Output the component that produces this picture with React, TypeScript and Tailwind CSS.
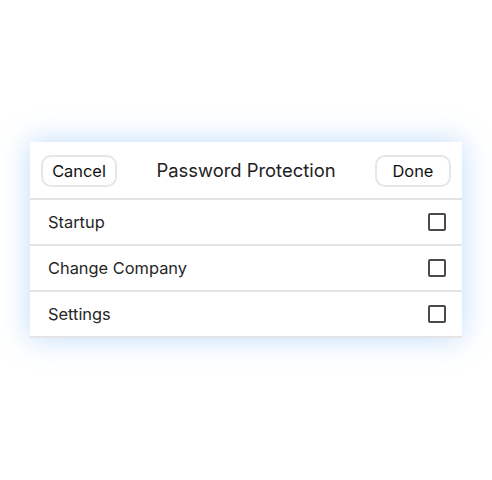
import React from "react";

function Row({ label }: { label: string }) {
  return (
    <div className="flex h-[46px] items-center justify-between border-b-2 border-[#e4e4e4] pl-[18px] pr-[16px]">
      <span className="text-[16.4px] text-[#262626]">{label}</span>
      <span className="h-[18px] w-[18px] rounded-[2px] border-2 border-[#4a4a4a] bg-white" />
    </div>
  );
}

export default function App() {
  return (
    <div
      className="flex h-[480px] w-[492px] items-center justify-center bg-white"
      style={{ fontFamily: "Inter, 'Noto Sans', sans-serif" }}
    >
      <div className="w-[432px] bg-white shadow-[0_0_28px_rgba(96,165,250,0.4)]">
        <div className="flex h-[58px] items-center justify-between border-b-2 border-[#e4e4e4] px-[11px] pt-[2px]">
          <button className="flex h-[32px] w-[76px] items-center justify-center rounded-[10px] border-2 border-[#e6e6e6] bg-white text-[16.4px] text-[#111]">
            Cancel
          </button>
          <span className="text-[18.4px] text-[#222]">Password Protection</span>
          <button className="flex h-[32px] w-[76px] items-center justify-center rounded-[10px] border-2 border-[#e6e6e6] bg-white text-[16.4px] text-[#111]">
            Done
          </button>
        </div>
        <Row label="Startup" />
        <Row label="Change Company" />
        <Row label="Settings" />
      </div>
    </div>
  );
}
